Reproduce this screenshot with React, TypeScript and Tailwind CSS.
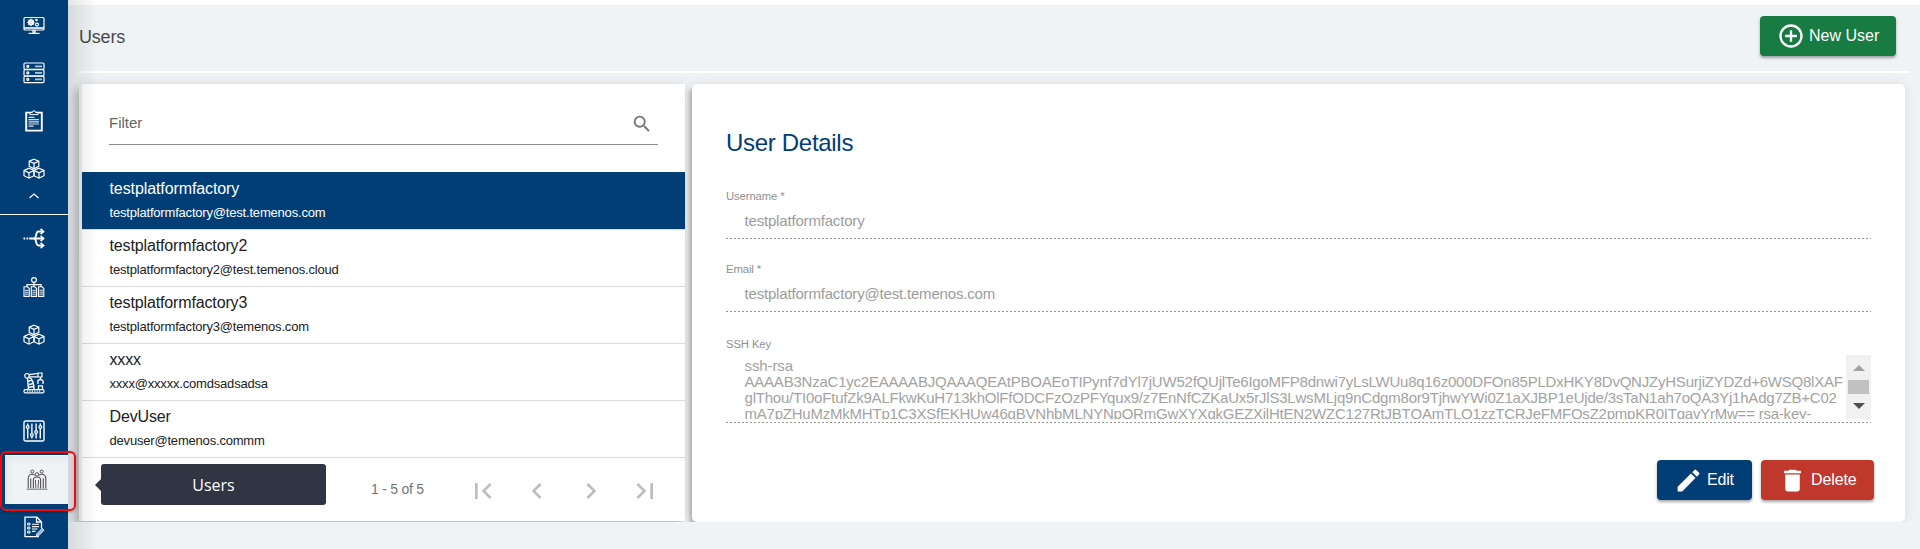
import type { ReactNode } from 'react';

type User = { name: string; email: string; nameTracking: string; emailTracking: string };

const users: User[] = [
  { name: 'testplatformfactory', email: 'testplatformfactory@test.temenos.com', nameTracking: 'tracking-[-0.1px]', emailTracking: 'tracking-[-0.19px]' },
  { name: 'testplatformfactory2', email: 'testplatformfactory2@test.temenos.cloud', nameTracking: 'tracking-[-0.14px]', emailTracking: 'tracking-[-0.19px]' },
  { name: 'testplatformfactory3', email: 'testplatformfactory3@temenos.com', nameTracking: 'tracking-[-0.14px]', emailTracking: 'tracking-[-0.19px]' },
  { name: 'xxxx', email: 'xxxx@xxxxx.comdsadsadsa', nameTracking: 'tracking-[-0.14px]', emailTracking: 'tracking-[-0.19px]' },
  { name: 'DevUser', email: 'devuser@temenos.commm', nameTracking: 'tracking-[-0.14px]', emailTracking: 'tracking-[-0.19px]' },
];

const sshKey = [
  'ssh-rsa',
  'AAAAB3NzaC1yc2EAAAABJQAAAQEAtPBOAEoTIPynf7dYl7jUW52fQUjlTe6IgoMFP8dnwi7yLsLWUu8q16z000DFOn85PLDxHKY8DvQNJZyHSurjiZYDZd+6WSQ8lXAF',
  'glThou/TI0oFtufZk9ALFkwKuH713khOlFfODCFzOzPFYqux9/z7EnNfCZKaUx5rJlS3LwsMLjq9nCdgm8or9TjhwYWi0Z1aXJBP1eUjde/3sTaN1ah7oQA3Yj1hAdg7ZB+C02',
  'mA7pZHuMzMkMHTp1C3XSfEKHUw46gBVNhbMLNYNpORmGwXYXqkGEZXilHtEN2WZC127RtJBTQAmTLQ1zzTCRJeFMFQsZ2pmpKR0ITgavYrMw== rsa-key-',
];

function NavIcon({ children, className = 'text-white' }: { children: ReactNode; className?: string }) {
  return (
    <svg width="22" height="22" viewBox="0 0 22 22" fill="none" stroke="currentColor" strokeWidth="1.2" className={className}>
      {children}
    </svg>
  );
}

function MonitorIcon() {
  return (
    <NavIcon>
      <rect x="1" y="3.5" width="20" height="12.500" rx="1" />
      <path d="M1 14h20" strokeWidth="2" opacity="0.800" />
      <path d="M11 16v3" strokeWidth="3.500" opacity="0.800" />
      <path d="M5.500 19.400h11" />
      <circle cx="8" cy="8.400" r="2.200" strokeWidth="1.700" />
      <path d="M8 4.600v7.600M4.200 8.400h7.600M5.300 5.700l5.400 5.400M10.700 5.700l-5.400 5.400" strokeWidth="0.900" />
      <circle cx="14" cy="10.600" r="1.500" />
      <circle cx="13.500" cy="6" r="0.700" />
    </NavIcon>
  );
}

function ServerIcon() {
  return (
    <NavIcon>
      <rect x="1" y="1" width="20" height="6.400" rx="1.200" />
      <rect x="1" y="7.600" width="20" height="6.400" rx="1.200" />
      <rect x="1" y="14.200" width="20" height="6.400" rx="1.200" />
      <circle cx="4.800" cy="4.300" r="1" />
      <circle cx="4.800" cy="10.800" r="1" />
      <circle cx="4.800" cy="17.400" r="1" />
      <path d="M12 4.300h7M12 10.800h7M12 17.400h7" strokeWidth="1.800" opacity="0.700" />
    </NavIcon>
  );
}

function ClipboardIcon() {
  return (
    <NavIcon>
      <path d="M3.200 2.600h15.600v18H3.200z" strokeWidth="1.900" />
      <path d="M7 4.600h8V2.400h-2.400a1.600 1.600 0 0 0-3.200 0H7z" fill="#003e75" strokeWidth="1" />
      <path d="M5.500 7.400h6M5.500 9.600h10.500M5.500 11.800h10.500M5.500 14h10.500M5.500 16.200h5" strokeWidth="1.200" opacity="0.850" />
    </NavIcon>
  );
}

function CubesIcon() {
  return (
    <NavIcon>
      <path d="M11 1.200l4.800 2v5.200L11 10.800 6.200 8.400V3.200zM6.200 3.200L11 5.400l4.800-2.200M11 5.400v5.400" strokeWidth="1.200" />
      <path d="M6 10.200l5 2.300v5.200L6 20.200l-5-2.500v-5.200zM1 12.500l5 2.400 5-2.400M6 14.900v5.300" strokeWidth="1.200" />
      <path d="M16 10.200l5 2.300v5.200l-5 2.500-5-2.500v-5.200zM11 12.500l5 2.400 5-2.400M16 14.900v5.300" strokeWidth="1.200" />
    </NavIcon>
  );
}

function BranchIcon() {
  return (
    <NavIcon>
      <path d="M.5 10.500h1.700M3.500 10.500h1.700M6.200 10.500h14" strokeWidth="1.900" />
      <path d="M11 10.500c3 0 1.200-7 4.500-7H20M11 10.500c3 0 1.200 7 4.500 7H20" strokeWidth="1.900" />
      <path d="M17.600.8l3 2.700-3 2.700M17.600 7.800l3 2.700-3 2.700M17.600 14.800l3 2.700-3 2.700" strokeWidth="1.600" />
    </NavIcon>
  );
}

function ClusterIcon() {
  return (
    <NavIcon>
      <circle cx="11" cy="4" r="2.400" />
      <path d="M11 6.400v4M4 11V8.600h14V11" />
      <path d="M1 20.400V10.800h3.500l1.800 1.800v7.800zM8.300 20.400V10.800h3.500l1.800 1.800v7.800zM15.600 20.400V10.800h3.400l1.800 1.800v7.800z" strokeWidth="1.100" />
      <path d="M2 14.300h3.500M2 16.200h3.500M2 18.100h3.500M9.300 14.300h3.500M9.300 16.200h3.500M9.300 18.100h3.500M16.500 14.300H20M16.500 16.200H20M16.500 18.100H20" strokeWidth="0.900" />
    </NavIcon>
  );
}

function RobotArmIcon() {
  return (
    <NavIcon>
      <rect x="1" y="17.600" width="20" height="3.200" rx="1.300" />
      <path d="M4 19.200h14" strokeDasharray="1.200 1.200" />
      <circle cx="4" cy="3.800" r="2.300" />
      <path d="M6 2.600L15 1.300M6.200 4.800L15 4.600M15 1h4v4h-4z" />
      <path d="M4.500 6.200l1 11.400M6.500 5.600c3.500 2 4.500 5 4.500 12M5.500 9l4-.8M6 12.500l4.500-1M6 15.300l4.800-.8" strokeWidth="1.400" />
      <path d="M17.500 5v2.500M14.700 10.500c0-4 5.600-4 5.600 0M15 10.500v1.500M20 10.500v1.500M15.500 17.500v-3.700h4v3.700" strokeWidth="1.300" />
    </NavIcon>
  );
}

function SlidersIcon() {
  return (
    <NavIcon>
      <rect x="1" y="1" width="20" height="20" rx="1.600" strokeWidth="1.400" />
      <path d="M4.700 3.500v15M8.900 3.500v15M13.100 3.500v15M17.300 3.500v15" strokeWidth="1.400" />
      <circle cx="4.700" cy="7" r="1.400" fill="#003e75" />
      <circle cx="8.900" cy="15" r="1.400" fill="#003e75" />
      <circle cx="13.100" cy="12" r="1.400" fill="#003e75" />
      <circle cx="17.300" cy="7" r="1.400" fill="#003e75" />
    </NavIcon>
  );
}

function PeopleIcon() {
  return (
    <NavIcon className="text-[#55504f]">
      <circle cx="6.300" cy="2.600" r="1.500" strokeWidth="1" />
      <circle cx="15.700" cy="2.600" r="1.500" strokeWidth="1" />
      <circle cx="11" cy="5.400" r="1.700" strokeWidth="1" />
      <path d="M2.200 19.500V10c0-3.500 1.800-4.800 4.200-4.800 1.300 0 2 .6 2.400 1.300M19.800 19.500V10c0-3.500-1.800-4.800-4.200-4.800-1.300 0-2 .6-2.400 1.300" strokeWidth="1.100" />
      <path d="M7.400 19.500V11c0-2 1.400-3 3.600-3s3.600 1 3.600 3v8.500M4.700 9.500v10M17.300 9.500v10" strokeWidth="1.100" />
      <path d="M9.500 11v4M12.500 11v4M9.800 15v4.500M12.200 15v4.500" strokeWidth="0.900" />
      <path d="M.5 20.300h21" strokeWidth="1" opacity="0.700" />
    </NavIcon>
  );
}

function DocumentIcon() {
  return (
    <NavIcon>
      <path d="M18.500 12.500V6l-4.500-4.800H2v19.500h14M13.500 1.500V6h5" strokeWidth="1.300" />
      <path d="M4.600 7.200H7v1.800H4.600zM4.600 11.200H7V13H4.600zM4.600 15.200H7V17H4.600z" strokeWidth="1" />
      <path d="M9 8.200h7M9 10.600h7M9 13h5.500M9 15.400h3.500" strokeWidth="1.100" />
      <path d="M19.200 12.400l1.800 1.800-5.200 5.400-2.600.9.700-2.700z" fill="currentColor" fillOpacity="0.600" strokeWidth="0.900" />
    </NavIcon>
  );
}

function NavItem({ children }: { children: ReactNode }) {
  return <a className="flex h-12 w-full shrink-0 items-center justify-center">{children}</a>;
}

function Sidebar() {
  return (
    <nav className="z-20 flex h-full w-[68px] shrink-0 flex-col bg-[#003e75] pt-px">
      <NavItem><MonitorIcon /></NavItem>
      <NavItem><ServerIcon /></NavItem>
      <NavItem><ClipboardIcon /></NavItem>
      <NavItem><CubesIcon /></NavItem>
      <div className="flex h-[22px] shrink-0 justify-center border-b border-white">
        <svg width="12" height="6" viewBox="0 0 12 6" fill="none" stroke="white" strokeWidth="1.200">
          <path d="M1.500 5L6 1l4.500 4" />
        </svg>
      </div>
      <NavItem><BranchIcon /></NavItem>
      <NavItem><ClusterIcon /></NavItem>
      <NavItem><CubesIcon /></NavItem>
      <NavItem><RobotArmIcon /></NavItem>
      <NavItem><SlidersIcon /></NavItem>
      <div className="relative h-12 shrink-0 pl-[5px]">
        <div className="flex h-[49px] items-center justify-center border-t border-white bg-[#eff3f6] shadow-[inset_3px_3px_7px_rgba(0,0,0,0.05)]">
          <PeopleIcon />
        </div>
        <div className="absolute top-[-4px] left-0 h-[60px] w-[76px] rounded-[6px] border-2 border-[#f5090d] shadow-[0_1px_3px_rgba(0,0,0,0.35)]" />
        <div className="absolute top-[9px] left-[95px] flex items-center">
          <svg width="6" height="12" viewBox="0 0 6 12" fill="#313443"><path d="M6 0v12L0 6z" /></svg>
          <div className="flex h-[41px] w-[225px] items-center justify-center rounded-[3px] bg-[#313443] font-['Open_Sans',sans-serif] text-base text-white">Users</div>
        </div>
      </div>
      <NavItem><DocumentIcon /></NavItem>
    </nav>
  );
}

function PagerIcon({ d }: { d: string }) {
  return (
    <svg width="32" height="32" viewBox="0 0 24 24" fill="#bdbdbd">
      <path d={d} />
    </svg>
  );
}

function UserList() {
  return (
    <section className="flex h-[437px] w-[606px] shrink-0 flex-col border-l-[3px] border-[#e8edf0] bg-white shadow-[-4px_5px_8px_rgba(0,0,0,0.2),0_0_12px_rgba(0,0,0,0.09)]">
      <div className="h-[88px] shrink-0 pr-[27px] pl-[27px]">
        <div className="flex h-[61px] items-end justify-between border-b border-[#8c8c8c] pr-[5px] pb-[9px]">
          <span className="pb-[2px] text-[15px] leading-5 text-[#666]">Filter</span>
          <svg width="22" height="22" viewBox="0 0 24 24" fill="#757575">
            <path d="M15.500 14h-.79l-.28-.27A6.471 6.471 0 0 0 16 9.500 6.500 6.500 0 1 0 9.500 16c1.610 0 3.090-.59 4.230-1.570l.27.28v.79l5 4.990L20.490 19l-4.990-5zm-6 0C7.010 14 5 11.990 5 9.500S7.010 5 9.500 5 14 7.010 14 9.500 11.990 14 9.500 14z" />
          </svg>
        </div>
      </div>
      <ul>
        {users.map((u, i) => (
          <li
            key={u.email}
            className={
              i === 0
                ? 'h-[58px] border-b border-[#dcdcdc] bg-[#003e75] bg-clip-padding pt-[7px] pl-[27.5px] text-white'
                : 'h-[57px] border-b border-[#dcdcdc] pt-[6px] pl-[27.5px] text-[#212121]'
            }
          >
            <div className={'text-base leading-5 ' + u.nameTracking}>{u.name}</div>
            <div className={'mt-[4px] text-[13px] leading-5 ' + u.emailTracking}>{u.email}</div>
          </li>
        ))}
      </ul>
      <div className="flex grow items-center pl-[289px]">
        <span className="w-[96px] text-[14px] tracking-[-0.250px] text-[#757575]">1 - 5 of 5</span>
        <div className="flex items-center gap-[22px] pt-[3px]">
          <PagerIcon d="M18.410 16.590L13.820 12l4.590-4.590L17 6l-6 6 6 6zM6 6h2v12H6z" />
          <PagerIcon d="M15.410 7.410L14 6l-6 6 6 6 1.410-1.410L10.830 12z" />
          <PagerIcon d="M10 6L8.590 7.410 13.170 12l-4.580 4.590L10 18l6-6z" />
          <PagerIcon d="M5.590 7.410L10.180 12l-4.590 4.590L7 18l6-6-6-6zM16 6h2v12h-2z" />
        </div>
      </div>
    </section>
  );
}

function DottedLine() {
  return <div className="h-px w-full bg-[repeating-linear-gradient(90deg,#949494_0_2px,transparent_2px_4px)]" />;
}

function Field({ label, value }: { label: string; value: string }) {
  return (
    <div className="flex h-[73px] flex-col">
      <span className="text-[11.25px] leading-4 tracking-[-0.080px] text-[#8f8f8f]">{label}</span>
      <span className="mt-[7px] mb-[7px] pl-[18.5px] text-[15px] leading-5 tracking-[-0.180px] text-[#9c9c9c]">{value}</span>
      <DottedLine />
    </div>
  );
}

function UserDetails() {
  return (
    <section className="flex h-[438px] w-[1213px] shrink-0 flex-col rounded-[5px] bg-white pr-[34px] pl-[34px] shadow-[-3px_4px_3px_rgba(0,0,0,0.2),0_0_12px_rgba(0,0,0,0.09)]">
      <h2 className="mt-[45px] text-[24px] leading-7 tracking-[-0.300px] text-[#003e75]">User Details</h2>
      <div className="mt-[31px]">
        <Field label="Username *" value="testplatformfactory" />
        <Field label="Email *" value="testplatformfactory@test.temenos.com" />
        <div className="mt-[2px]">
          <div className="text-[11.25px] leading-4 tracking-[-0.080px] text-[#8f8f8f]">SSH Key</div>
          <div className="mt-[3px] mb-[3px] flex h-[64px] justify-between overflow-hidden">
            <div className="pt-[3px] pl-[18.5px] text-[15px] leading-4 whitespace-nowrap text-[#a3a3a3]">
              <div className="tracking-[-0.100px]">{sshKey[0]}</div>
              <div className="tracking-[-0.220px]">{sshKey[1]}</div>
              <div className="tracking-[-0.210px]">{sshKey[2]}</div>
              <div className="tracking-[-0.220px]">{sshKey[3]}</div>
            </div>
            <div className="flex w-[25px] shrink-0 flex-col items-center bg-[#f1f1f1] pt-[10px]">
              <svg width="12" height="6" viewBox="0 0 12 6" fill="#a3a3a3"><path d="M6 0l6 6H0z" /></svg>
              <div className="mt-[9px] mb-[9px] h-[14px] w-[21px] bg-[#c1c1c1]" />
              <svg width="12" height="6" viewBox="0 0 12 6" fill="#505050"><path d="M6 6L0 0h12z" /></svg>
            </div>
          </div>
          <DottedLine />
        </div>
      </div>
      <div className="mt-[37px] mr-[-3px] flex justify-end gap-[9px]">
        <button className="flex h-10 w-[95px] items-center rounded-[4px] bg-[#003e75] pl-[17px] text-base text-white shadow-[0_2px_3px_rgba(0,0,0,0.35)]">
          <svg width="29" height="29" viewBox="0 0 24 24" fill="white"><path d="M3 17.250V21h3.750L17.810 9.940l-3.750-3.750zM20.710 7.040a1 1 0 0 0 0-1.410l-2.340-2.340a1 1 0 0 0-1.410 0l-1.830 1.830 3.750 3.750z" /></svg>
          <span className="ml-[4px] tracking-[-0.200px]">Edit</span>
        </button>
        <button className="flex h-10 w-[113px] items-center rounded-[4px] bg-[#c0382b] pl-[17px] text-base text-white shadow-[0_2px_3px_rgba(0,0,0,0.35)]">
          <svg width="29" height="29" viewBox="0 0 24 24" fill="white"><path d="M6 19c0 1.100.9 2 2 2h8c1.100 0 2-.9 2-2V7H6zM19 4h-3.500l-1-1h-5l-1 1H5v2h14z" /></svg>
          <span className="ml-[4px] tracking-[-0.100px]">Delete</span>
        </button>
      </div>
    </section>
  );
}

export default function App() {
  return (
    <div className="flex h-[549px] w-[1920px] overflow-hidden bg-[#eff3f6] font-['Liberation_Sans',Arial,sans-serif]">
      <Sidebar />
      <main className="relative flex grow flex-col border-t-[5px] border-white pl-[11px]">
        <header className="flex h-[68px] w-[1830px] items-start justify-between border-b-2 border-white pt-[11px] pr-[13px]">
          <h1 className="mt-[9px] text-[18px] leading-6 tracking-[-0.200px] text-[#4a4a4a]">Users</h1>
          <button className="flex h-10 w-[136px] items-center rounded-[4px] bg-[#187b41] pl-[17px] text-base text-white shadow-[0_2px_3px_rgba(0,0,0,0.35)]">
            <svg width="28" height="28" viewBox="0 0 24 24" fill="white"><path d="M13 7h-2v4H7v2h4v4h2v-4h4v-2h-4zm-1-5a10 10 0 1 0 0 20 10 10 0 0 0 0-20zm0 18a8 8 0 1 1 0-16 8 8 0 0 1 0 16z" /></svg>
            <span className="ml-[4px]">New User</span>
          </button>
        </header>
        <div className="-ml-[11px] flex gap-[7px] overflow-hidden pt-[11px] pl-[11px]">
          <UserList />
          <UserDetails />
        </div>
        <div className="pointer-events-none absolute top-[-5px] bottom-0 left-0 w-[30px] bg-linear-to-r from-black/10 to-transparent" />
      </main>
    </div>
  );
}
